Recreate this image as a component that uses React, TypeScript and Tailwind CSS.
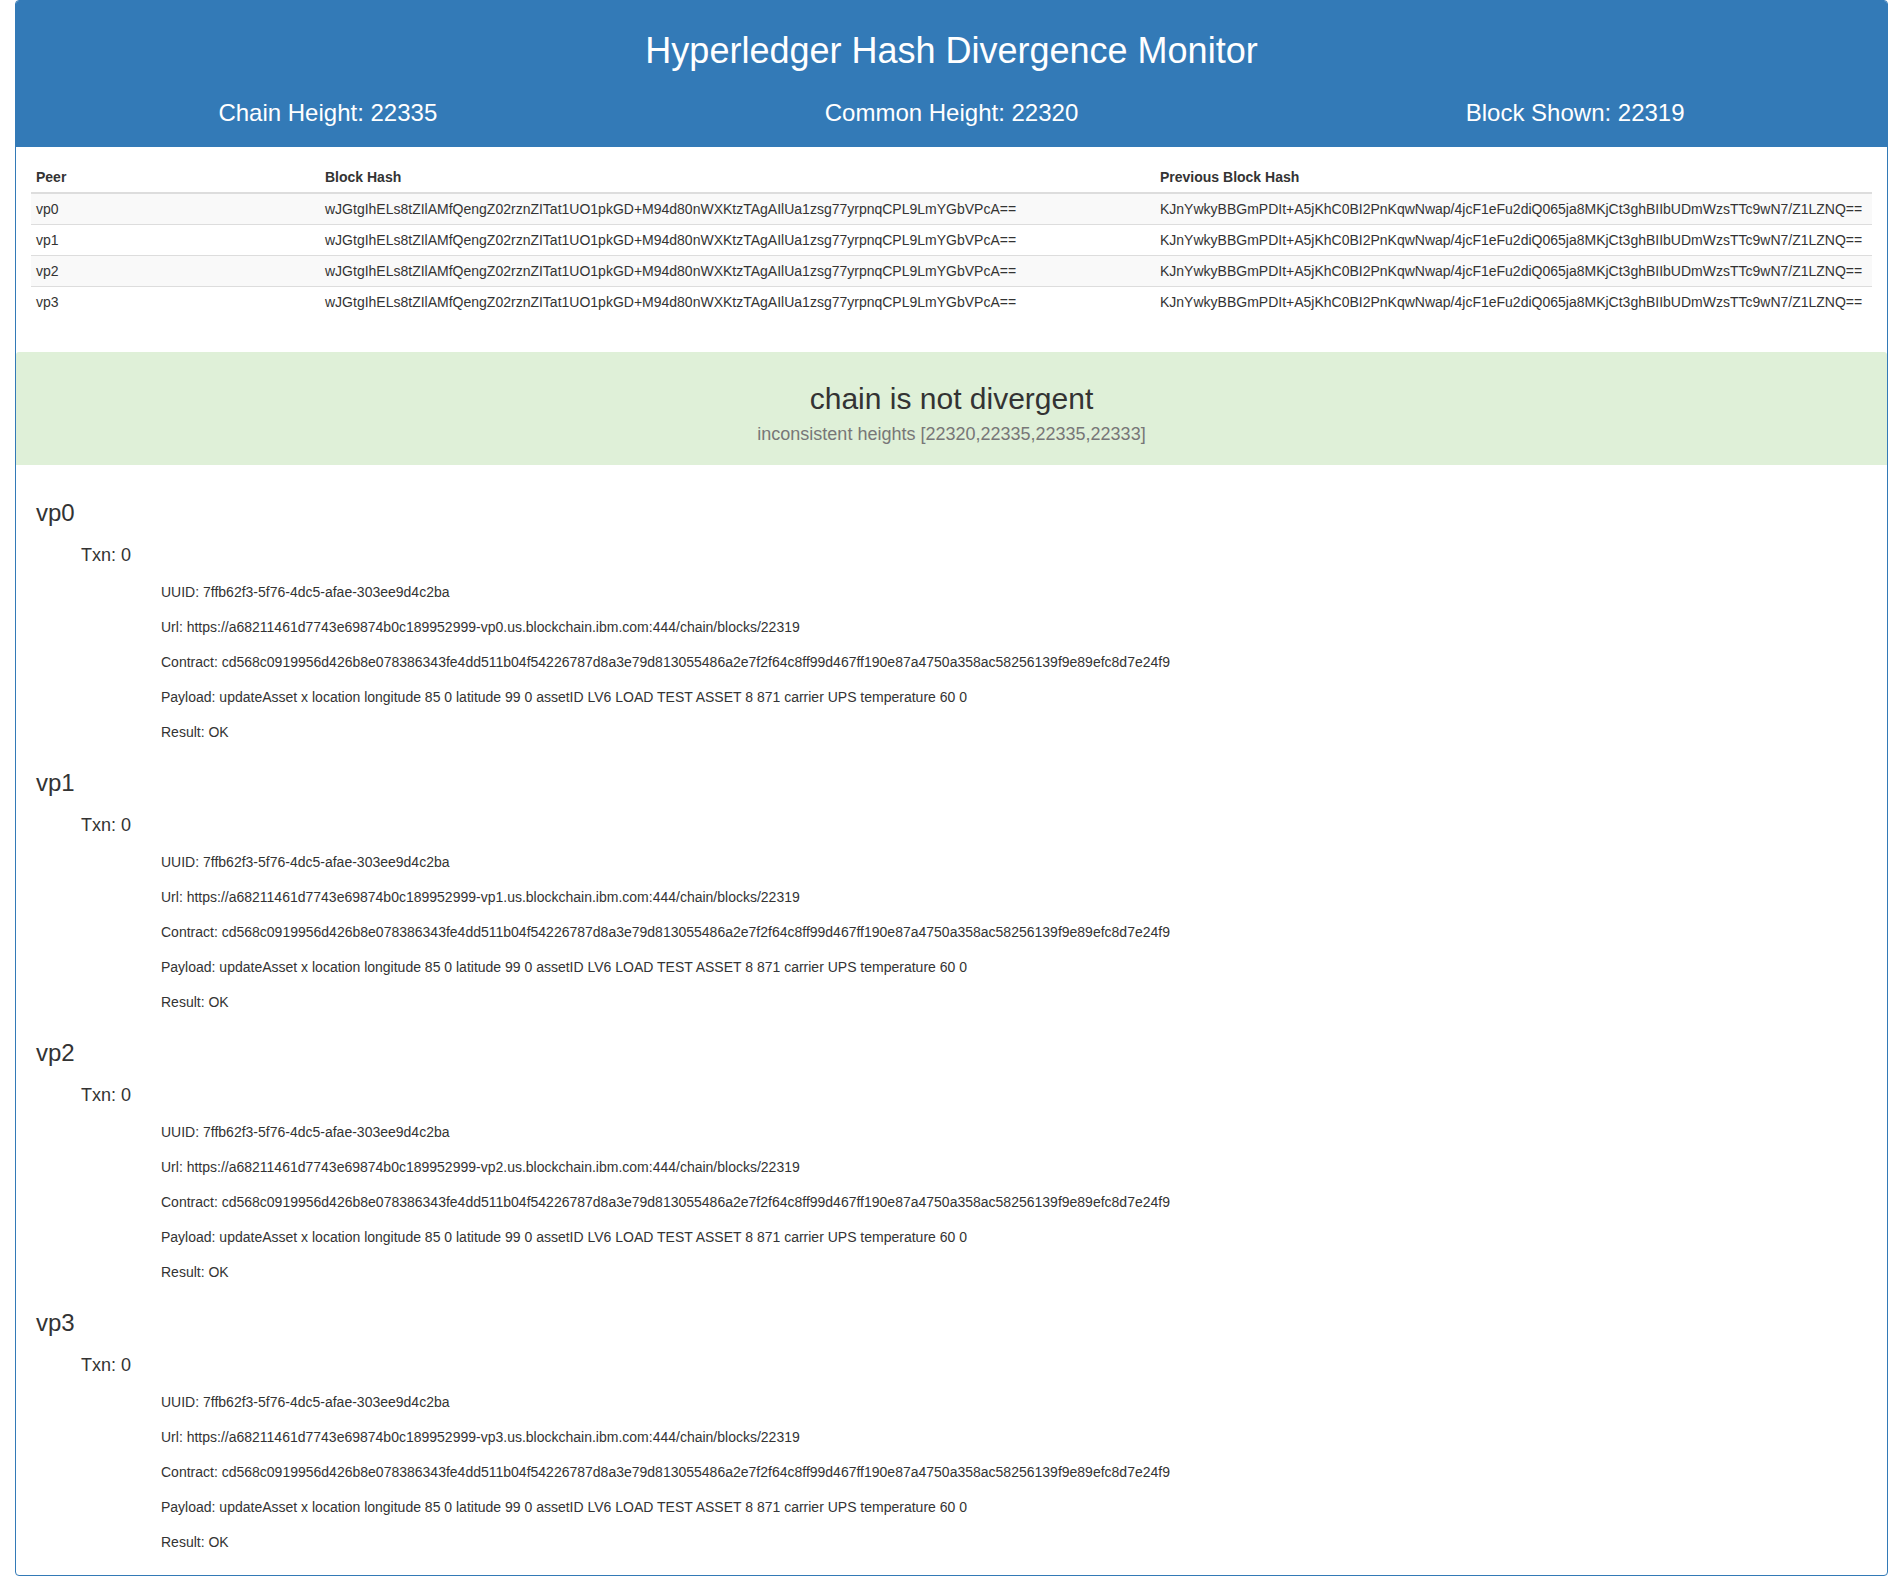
const peers = ["vp0", "vp1", "vp2", "vp3"];

const blockHash =
  "wJGtgIhELs8tZIlAMfQengZ02rznZITat1UO1pkGD+M94d80nWXKtzTAgAIlUa1zsg77yrpnqCPL9LmYGbVPcA==";
const previousBlockHash =
  "KJnYwkyBBGmPDIt+A5jKhC0BI2PnKqwNwap/4jcF1eFu2diQ065ja8MKjCt3ghBIIbUDmWzsTTc9wN7/Z1LZNQ==";
const contract =
  "cd568c0919956d426b8e078386343fe4dd511b04f54226787d8a3e79d813055486a2e7f2f64c8ff99d467ff190e87a4750a358ac58256139f9e89efc8d7e24f9";

const stats = ["Chain Height: 22335", "Common Height: 22320", "Block Shown: 22319"];

function Header() {
  return (
    <header className="border-b border-[#337ab7] bg-[#337ab7] py-[10px] text-center text-white">
      <h1 className="mt-5 mb-[10px] text-[36px] leading-[39px]">Hyperledger Hash Divergence Monitor</h1>
      <div className="grid grid-cols-3 pt-5 pb-[10px]">
        {stats.map((stat) => (
          <h3 key={stat} className="text-[24px] leading-[26px]">
            {stat}
          </h3>
        ))}
      </div>
    </header>
  );
}

function HashTable() {
  return (
    <div className="px-[15px] pt-[15px] pb-[35px]">
      <table className="w-full border-separate border-spacing-0 text-left text-[14px] leading-5 whitespace-nowrap">
        <thead>
          <tr>
            <th className="w-[289px] border-b-2 border-[#ddd] p-[5px]">Peer</th>
            <th className="w-[835px] border-b-2 border-[#ddd] p-[5px]">Block Hash</th>
            <th className="border-b-2 border-[#ddd] p-[5px]">Previous Block Hash</th>
          </tr>
        </thead>
        <tbody>
          {peers.map((peer) => (
            <tr key={peer} className="group odd:bg-[#f9f9f9]">
              <td className="border-t border-[#ddd] p-[5px] group-first:border-t-0">{peer}</td>
              <td className="border-t border-[#ddd] p-[5px] group-first:border-t-0">{blockHash}</td>
              <td className="border-t border-[#ddd] p-[5px] group-first:border-t-0">{previousBlockHash}</td>
            </tr>
          ))}
        </tbody>
      </table>
    </div>
  );
}

function Status() {
  return (
    <div className="rounded-t-[3px] border-b border-[#dff0d8] bg-[#dff0d8] pt-[30px] pb-5 text-center">
      <h2 className="text-[30px] leading-[33px]">chain is not divergent</h2>
      <h4 className="mt-[10px] text-[18px] leading-[19px] text-[#777]">
        inconsistent heights [22320,22335,22335,22333]
      </h4>
    </div>
  );
}

function PeerDetails({ peer }: { peer: string }) {
  const lines = [
    "UUID: 7ffb62f3-5f76-4dc5-afae-303ee9d4c2ba",
    `Url: https://a68211461d7743e69874b0c189952999-${peer}.us.blockchain.ibm.com:444/chain/blocks/22319`,
    `Contract: ${contract}`,
    "Payload: updateAsset x location longitude 85 0 latitude 99 0 assetID LV6 LOAD TEST ASSET 8 871 carrier UPS temperature 60 0",
    "Result: OK",
  ];
  return (
    <section>
      <h3 className="text-[24px] leading-[26px]">{peer}</h3>
      <h4 className="mt-5 ml-[45px] text-[18px] leading-[19px]">Txn: 0</h4>
      <div className="mt-5 ml-[125px] flex flex-col gap-5 text-[14px] leading-[15px]">
        {lines.map((line) => (
          <p key={line}>{line}</p>
        ))}
      </div>
    </section>
  );
}

export default function App() {
  return (
    <div className="bg-white px-[15px] pb-5 font-['Liberation_Sans',Arial,sans-serif] text-[#333] [&_h1]:font-medium [&_h2]:font-medium">
      <main className="overflow-hidden rounded-[4px] border border-[#337ab7]">
        <Header />
        <HashTable />
        <Status />
        <div className="flex flex-col gap-[30px] px-5 pt-[35px] pb-[25px]">
          {peers.map((peer) => (
            <PeerDetails key={peer} peer={peer} />
          ))}
        </div>
      </main>
    </div>
  );
}
